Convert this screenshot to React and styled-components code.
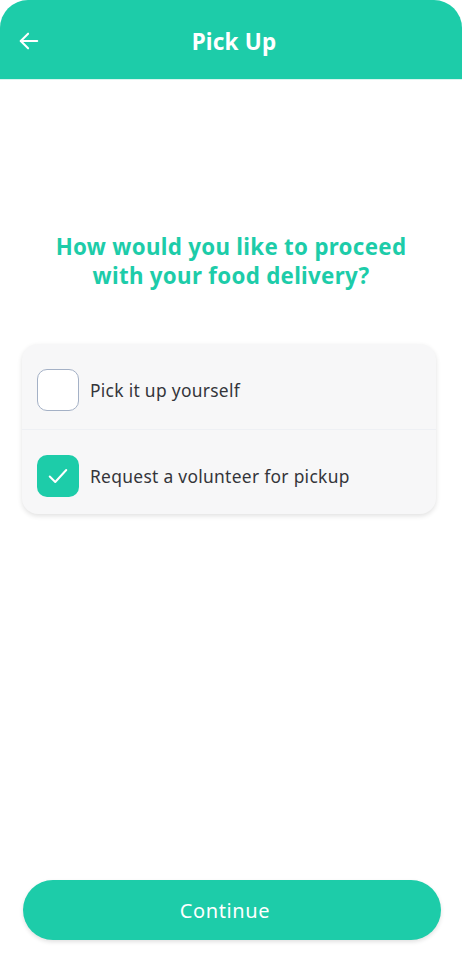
import React, { useState } from 'react';
import styled, { createGlobalStyle } from 'styled-components';

const GlobalStyle = createGlobalStyle`
  html, body {
    margin: 0;
    padding: 0;
    background: #ffffff;
  }
  body {
    font-family: "Noto Sans", "Open Sans", sans-serif;
  }
`;

const Screen = styled.div`
  width: 462px;
  height: 975px;
  display: flex;
  flex-direction: column;
  background: #ffffff;
  overflow: hidden;
`;

const Header = styled.header`
  height: 80px;
  flex-shrink: 0;
  background: #1dcca9;
  border-radius: 28px 28px 0 0;
  border-bottom: 1px solid #d8f5ef;
  display: grid;
  grid-template-columns: 60px 1fr 60px;
  align-items: center;
  box-sizing: border-box;
  padding-top: 3px;
`;

const BackButton = styled.button`
  background: none;
  border: none;
  padding: 0 0 0 18px;
  display: flex;
  align-items: center;
  color: #ffffff;
  cursor: pointer;
  height: 100%;
  margin-top: -1px;
`;

const Title = styled.h1`
  margin: 0;
  padding-left: 6px;
  text-align: center;
  color: #ffffff;
  font-size: 22.5px;
  font-weight: 700;
  letter-spacing: 0.2px;
`;

const Body = styled.main`
  flex: 1;
  display: flex;
  flex-direction: column;
  padding: 152px 22px 0 22px;
`;

const Question = styled.h2`
  margin: 0 0 54px;
  text-align: center;
  color: #1dcca9;
  font-size: 22.3px;
  line-height: 29px;
  font-weight: 700;
  letter-spacing: 0.3px;
`;

const Card = styled.div`
  width: 414px;
  background: #f7f7f8;
  border-radius: 16px;
  box-shadow: 0 2px 5px rgba(0, 0, 0, 0.12);
  display: flex;
  flex-direction: column;
`;

const Option = styled.label`
  height: 85px;
  box-sizing: border-box;
  padding: 7px 15px 0;
  display: flex;
  align-items: center;
  gap: 11px;
  cursor: pointer;
  & + & {
    border-top: 1px solid #eef0f4;
  }
`;

const Box = styled.span`
  width: 42px;
  height: 42px;
  box-sizing: border-box;
  border-radius: 10px;
  display: flex;
  align-items: center;
  justify-content: center;
  flex-shrink: 0;
  background: ${p => (p.$checked ? '#1dcca9' : '#ffffff')};
  border: ${p => (p.$checked ? 'none' : '1.5px solid #a4b1c6')};
`;

const OptionText = styled.span`
  font-size: 17.4px;
  color: #34353a;
  letter-spacing: 0.3px;
`;

const Footer = styled.footer`
  padding: 0 21px 35px 23px;
`;

const ContinueButton = styled.button`
  width: 100%;
  height: 60px;
  border: none;
  border-radius: 30px;
  background: #1dcca9;
  color: #ffffff;
  font-family: "Noto Sans", "Open Sans", sans-serif;
  font-size: 20px;
  letter-spacing: 0.6px;
  padding: 0 14px 0 0;
  box-shadow: 0 2px 4px rgba(0, 0, 0, 0.12);
  cursor: pointer;
`;

const options = ['Pick it up yourself', 'Request a volunteer for pickup'];

export default function App() {
  const [selected, setSelected] = useState(1);
  return (
    <>
      <GlobalStyle />
      <Screen>
        <Header>
          <BackButton aria-label="back">
            <svg width="22" height="22" viewBox="0 0 24 24" fill="none" stroke="currentColor" strokeWidth="2.2" strokeLinecap="round" strokeLinejoin="round">
              <path d="M21 12H3" />
              <path d="M11 4l-8 8 8 8" />
            </svg>
          </BackButton>
          <Title>Pick Up</Title>
          <span />
        </Header>
        <Body>
          <Question>
            How would you like to proceed
            <br />
            with your food delivery?
          </Question>
          <Card>
            {options.map((o, i) => (
              <Option key={o} onClick={() => setSelected(i)}>
                <Box $checked={selected === i}>
                  {selected === i && (
                    <svg width="22" height="22" viewBox="0 0 24 24" fill="none" stroke="#ffffff" strokeWidth="2.2" strokeLinecap="round" strokeLinejoin="round">
                      <path d="M3 12.5l6 6L21 5.5" />
                    </svg>
                  )}
                </Box>
                <OptionText>{o}</OptionText>
              </Option>
            ))}
          </Card>
        </Body>
        <Footer>
          <ContinueButton>Continue</ContinueButton>
        </Footer>
      </Screen>
    </>
  );
}
